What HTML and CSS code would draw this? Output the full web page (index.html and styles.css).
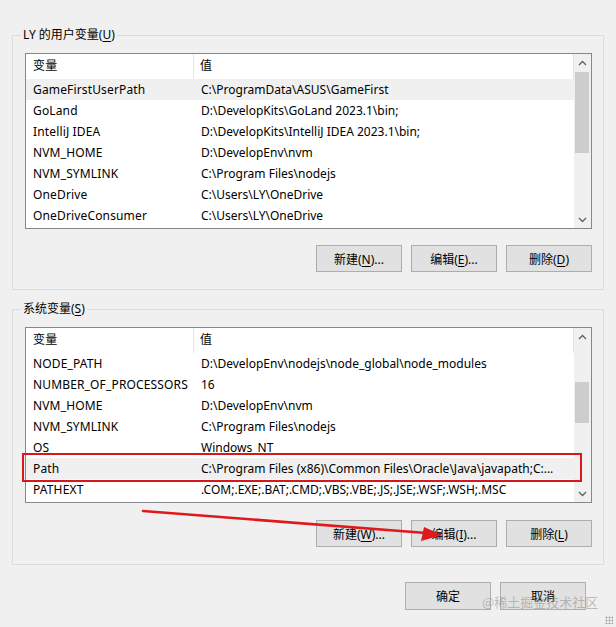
FILE: index.html
```html
<!DOCTYPE html>
<html lang="zh-CN">
<head>
<meta charset="utf-8">
<title>环境变量</title>
<link rel="stylesheet" href="styles.css">
</head>
<body>
<div class="dialog">
  <div class="group">
    <div class="legend">LY 的用户变量(<u>U</u>)</div>
    <div class="list">
      <div class="list-main">
        <div class="row head"><span class="c1">变量</span><span class="c2">值</span></div>
        <div class="row sel"><span class="c1">GameFirstUserPath</span><span class="c2">C:\ProgramData\ASUS\GameFirst</span></div>
        <div class="row"><span class="c1">GoLand</span><span class="c2">D:\DevelopKits\GoLand 2023.1\bin;</span></div>
        <div class="row"><span class="c1">IntelliJ IDEA</span><span class="c2">D:\DevelopKits\IntelliJ IDEA 2023.1\bin;</span></div>
        <div class="row"><span class="c1">NVM_HOME</span><span class="c2">D:\DevelopEnv\nvm</span></div>
        <div class="row"><span class="c1">NVM_SYMLINK</span><span class="c2">C:\Program Files\nodejs</span></div>
        <div class="row"><span class="c1">OneDrive</span><span class="c2">C:\Users\LY\OneDrive</span></div>
        <div class="row"><span class="c1">OneDriveConsumer</span><span class="c2">C:\Users\LY\OneDrive</span></div>
      </div>
      <div class="scrollbar">
        <div class="arrow"><svg width="9" height="6" viewBox="0 0 9 6"><path d="M1 5 L4.5 1.5 L8 5" fill="none" stroke="#606060" stroke-width="1.3"/></svg></div>
        <div class="track"><div class="thumb thumb-user"></div></div>
        <div class="arrow"><svg width="9" height="6" viewBox="0 0 9 6"><path d="M1 1 L4.5 4.5 L8 1" fill="none" stroke="#606060" stroke-width="1.3"/></svg></div>
      </div>
    </div>
    <div class="buttons">
      <button class="btn">新建(<u>N</u>)...</button>
      <button class="btn">编辑(<u>E</u>)...</button>
      <button class="btn">删除(<u>D</u>)</button>
    </div>
  </div>

  <div class="group group-sys">
    <div class="legend">系统变量(<u>S</u>)</div>
    <div class="list">
      <div class="list-main">
        <div class="row head"><span class="c1">变量</span><span class="c2">值</span></div>
        <div class="row"><span class="c1">NODE_PATH</span><span class="c2">D:\DevelopEnv\nodejs\node_global\node_modules</span></div>
        <div class="row"><span class="c1">NUMBER_OF_PROCESSORS</span><span class="c2">16</span></div>
        <div class="row"><span class="c1">NVM_HOME</span><span class="c2">D:\DevelopEnv\nvm</span></div>
        <div class="row"><span class="c1">NVM_SYMLINK</span><span class="c2">C:\Program Files\nodejs</span></div>
        <div class="row"><span class="c1">OS</span><span class="c2">Windows_NT</span></div>
        <div class="row sel"><span class="c1">Path</span><span class="c2">C:\Program Files (x86)\Common Files\Oracle\Java\javapath;C:...</span></div>
        <div class="row"><span class="c1">PATHEXT</span><span class="c2">.COM;.EXE;.BAT;.CMD;.VBS;.VBE;.JS;.JSE;.WSF;.WSH;.MSC</span></div>
      </div>
      <div class="scrollbar">
        <div class="arrow"><svg width="9" height="6" viewBox="0 0 9 6"><path d="M1 5 L4.5 1.5 L8 5" fill="none" stroke="#606060" stroke-width="1.3"/></svg></div>
        <div class="track"><div class="thumb thumb-sys"></div></div>
        <div class="arrow"><svg width="9" height="6" viewBox="0 0 9 6"><path d="M1 1 L4.5 4.5 L8 1" fill="none" stroke="#606060" stroke-width="1.3"/></svg></div>
      </div>
    </div>
    <div class="buttons">
      <button class="btn">新建(<u>W</u>)...</button>
      <button class="btn">编辑(<u>I</u>)...</button>
      <button class="btn">删除(<u>L</u>)</button>
    </div>
  </div>

  <div class="footer">
    <button class="btn">确定</button>
    <button class="btn">取消</button>
  </div>

  <svg class="annot" width="616" height="627" viewBox="0 0 616 627">
    <rect x="23" y="454" width="558" height="27" fill="none" stroke="#d9161c" stroke-width="2"/>
    <path d="M143 511 L426 533" stroke="#e0181c" stroke-width="2.6" fill="none" stroke-linecap="round"/>
    <path d="M442 535 L421 541 L424 527 Z" fill="#e0181c"/>
  </svg>
  <div class="watermark">@稀土掘金技术社区</div>
  <div class="grip"></div>
</div>
</body>
</html>
```

FILE: styles.css
```css
html, body {
  margin: 0;
  padding: 0;
  background: #f0f0f0;
}
body {
  font-family: "Noto Sans", "Noto Sans CJK SC", sans-serif;
  font-size: 12px;
  color: #000;
}
.dialog {
  position: relative;
  width: 616px;
  height: 627px;
  overflow: hidden;
  padding-top: 35px;
  box-sizing: border-box;
}
.group {
  margin-left: 12px;
  width: 592px;
  box-sizing: border-box;
  border: 1px solid #dcdcdc;
  padding: 0 11px 17px 12px;
}
.group-sys {
  margin-top: 19px;
}
.legend {
  display: block;
  width: max-content;
  margin: -9px 0 0 -4px;
  padding: 0 2px;
  line-height: 16px;
  height: 16px;
  background: #f0f0f0;
}
.legend u, .btn u {
  text-underline-offset: 2px;
}
.list {
  margin-top: 10px;
  height: 176px;
  box-sizing: border-box;
  border: 1px solid #828790;
  background: #fff;
  display: flex;
  overflow: hidden;
}
.list-main {
  flex: 1;
  min-width: 0;
}
.row {
  display: flex;
  height: 21px;
  line-height: 21px;
  white-space: nowrap;
}
.row.head {
  height: 25px;
  line-height: 24px;
  border-right: 1px solid #e5e5e5;
}
.row.sel {
  background: #f0f0f0;
}
.c1 {
  width: 168px;
  flex: none;
  padding-left: 7px;
  box-sizing: border-box;
  overflow: hidden;
  letter-spacing: 0.15px;
}
.c2 {
  flex: 1;
  padding-left: 7px;
  overflow: hidden;
}
.head .c1 {
  border-right: 1px solid #e5e5e5;
}
.head .c2 {
  padding-left: 6px;
}
.scrollbar {
  width: 17px;
  flex: none;
  background: #f0f0f0;
  display: flex;
  flex-direction: column;
}
.arrow {
  height: 17px;
  flex: none;
  display: flex;
  align-items: center;
  justify-content: center;
}
.track {
  flex: 1;
  padding: 0 2px 0 1px;
}
.thumb {
  background: #cdcdcd;
}
.thumb-user {
  margin-top: 1px;
  height: 81px;
}
.thumb-sys {
  margin-top: 37px;
  height: 41px;
}
.buttons {
  display: flex;
  justify-content: flex-end;
  gap: 9px;
  margin-top: 16px;
}
.group-sys .buttons {
  margin-top: 17px;
}
.btn {
  width: 86px;
  height: 27px;
  box-sizing: border-box;
  border: 1px solid #adadad;
  background: #e1e1e1;
  font-family: "Noto Sans", "Noto Sans CJK SC", sans-serif;
  font-size: 12px;
  color: #000;
  padding: 0;
  margin: 0;
}
.footer {
  display: flex;
  justify-content: flex-end;
  gap: 9px;
  margin-top: 17px;
  padding-right: 30px;
}
.footer .btn {
  height: 28px;
}
.annot {
  position: absolute;
  left: 0;
  top: 0;
  pointer-events: none;
}
.watermark {
  position: absolute;
  left: 482px;
  top: 593px;
  font-family: "Noto Sans CJK SC", sans-serif;
  font-size: 13px;
  line-height: 18px;
  color: rgba(140, 140, 140, 0.55);
}
.grip {
  position: absolute;
  right: 3px;
  bottom: 3px;
  width: 8px;
  height: 8px;
  background-image: radial-gradient(circle, #a0a0a0 0.8px, transparent 1.2px);
  background-size: 3px 3px;
}
```
